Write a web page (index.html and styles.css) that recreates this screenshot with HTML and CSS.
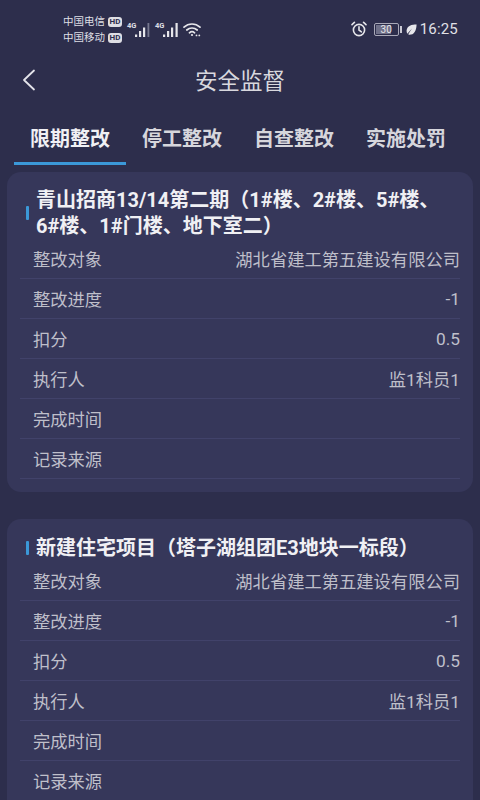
FILE: index.html
```html
<!DOCTYPE html>
<html lang="zh">
<head>
<meta charset="utf-8">
<title>安全监督</title>
<link rel="stylesheet" href="styles.css">
</head>
<body>
<div class="status">
  <div class="status-left">
    <div class="carriers">
      <div class="carrier"><span>中国电信</span><b class="hd">HD</b></div>
      <div class="carrier"><span>中国移动</span><b class="hd">HD</b></div>
    </div>
    <div class="signal"><span class="net">4G</span>
      <svg class="bars" width="16" height="16" viewBox="0 0 16 16"><rect x="0" y="12.500" width="2.200" height="2.500" fill="#e6e6ea"/><rect x="4" y="9" width="2.200" height="6" fill="#e6e6ea"/><rect x="8" y="5.500" width="2.200" height="9.500" fill="#e6e6ea"/><rect x="12.500" y="1" width="1.800" height="14" fill="#77788f"/></svg>
    </div>
    <div class="signal"><span class="net">4G</span>
      <svg class="bars" width="16" height="16" viewBox="0 0 16 16"><rect x="0" y="12.500" width="2.200" height="2.500" fill="#e6e6ea"/><rect x="4" y="9" width="2.200" height="6" fill="#e6e6ea"/><rect x="8" y="5.500" width="2.200" height="9.500" fill="#e6e6ea"/><rect x="12.500" y="1" width="2.200" height="14" fill="#e6e6ea"/></svg>
    </div>
    <svg class="wifi" width="18" height="15" viewBox="0 0 18 15" fill="none" stroke="#e6e6ea" stroke-width="1.700" stroke-linecap="round"><path d="M1 5.200C5.600 .9 12.400 .9 17 5.200"/><path d="M3.800 8C6.800 5.300 11.200 5.300 14.200 8"/><path d="M6.400 10.800C8 9.400 10 9.400 11.600 10.800"/><circle cx="9" cy="13" r="1.100" fill="#e6e6ea" stroke="none"/><circle cx="13.500" cy="13.400" r=".9" fill="#e6e6ea" stroke="none"/><circle cx="16.300" cy="13.400" r=".9" fill="#e6e6ea" stroke="none"/></svg>
  </div>
  <div class="status-right">
    <svg class="alarm" width="16" height="16" viewBox="0 0 16 16" fill="none" stroke="#e6e6ea" stroke-width="1.600" stroke-linecap="round"><circle cx="8" cy="9" r="5.600"/><path d="M8 5.800V9l2.400 1.800"/><path d="M1 3.600 3.400 1.400M15 3.600 12.600 1.400"/></svg>
    <div class="battery"><div class="battery-body"><span class="battery-fill"></span><span class="battery-num">30</span></div><span class="battery-cap"></span></div>
    <svg class="leaf" width="11" height="11" viewBox="0 0 11 11"><path d="M10.600 .4C5.800 .4 1 1.400 .6 6.600c-.1 1.200.2 2.300.7 3.100L6 4.400 2.200 10.200c.8.5 1.800.6 2.800.4C9.400 9.600 10.400 4.400 10.600 .4Z" fill="#e6e6ea"/></svg>
    <span class="time">16:25</span>
  </div>
</div>

<header class="nav">
  <svg class="back" width="14" height="22" viewBox="0 0 14 22" fill="none" stroke="#e4e4ea" stroke-width="1.800" stroke-linecap="round" stroke-linejoin="round"><path d="M12 1.500 2 11l10 9.500"/></svg>
  <h1 class="nav-title">安全监督</h1>
</header>

<nav class="tabs">
  <div class="tab tab-active">限期整改</div>
  <div class="tab">停工整改</div>
  <div class="tab">自查整改</div>
  <div class="tab">实施处罚</div>
</nav>

<main class="list">
  <section class="card">
    <h2 class="card-title"><span class="marker"></span><span class="card-title-text">青山招商13/14第二期（1#楼、2#楼、5#楼、6#楼、1#门楼、地下室二）</span></h2>
    <div class="row"><span>整改对象</span><span>湖北省建工第五建设有限公司</span></div>
    <div class="row"><span>整改进度</span><span>-1</span></div>
    <div class="row"><span>扣分</span><span>0.5</span></div>
    <div class="row"><span>执行人</span><span>监1科员1</span></div>
    <div class="row"><span>完成时间</span><span></span></div>
    <div class="row"><span>记录来源</span><span></span></div>
  </section>
  <section class="card">
    <h2 class="card-title card-title-single"><span class="marker"></span><span class="card-title-text">新建住宅项目（塔子湖组团E3地块一标段）</span></h2>
    <div class="row"><span>整改对象</span><span>湖北省建工第五建设有限公司</span></div>
    <div class="row"><span>整改进度</span><span>-1</span></div>
    <div class="row"><span>扣分</span><span>0.5</span></div>
    <div class="row"><span>执行人</span><span>监1科员1</span></div>
    <div class="row"><span>完成时间</span><span></span></div>
    <div class="row"><span>记录来源</span><span></span></div>
  </section>
</main>
</body>
</html>
```

FILE: styles.css
```css
* { box-sizing: border-box; }
html, body { margin: 0; padding: 0; }
body {
  width: 480px;
  height: 800px;
  overflow: hidden;
  background: #2d2e4c;
  font-family: Roboto, "Noto Sans CJK SC", sans-serif;
  color: #c9c9d3;
}
.status {
  height: 58px;
  display: flex;
  justify-content: space-between;
  align-items: center;
  padding: 0 22px 0 63px;
  color: #dedee4;
}
.status-left, .status-right { display: flex; align-items: center; }
.carriers { display: flex; flex-direction: column; margin-top: 2px; }
.carrier { display: flex; align-items: center; gap: 3px; height: 16px; font-size: 10.500px; line-height: 16px; }
.hd {
  width: 14px;
  height: 10px;
  border-radius: 3px;
  background: #dedee4;
  color: #2d2e4c;
  font-size: 8px;
  line-height: 10px;
  text-align: center;
  font-weight: 700;
}
.signal { display: flex; align-items: flex-end; margin-left: 5px; height: 18px; }
.net { font-size: 7.500px; font-weight: 700; line-height: 9px; align-self: flex-start; transform: translateY(1px); width: 8px; }
.signal + .signal { margin-left: 4px; }
.wifi { margin-left: 4px; }
.alarm { margin-right: 7px; }
.battery { display: flex; align-items: center; margin-right: 4px; }
.battery-body {
  position: relative;
  width: 25px;
  height: 13px;
  border: 1px solid #a9a9b8;
  border-radius: 2px;
}
.battery-fill { position: absolute; left: 1px; top: 1px; bottom: 1px; width: 15px; background: #6f7088; }
.battery-num { position: absolute; inset: 0; text-align: center; font-size: 10px; line-height: 11px; color: #e6e6ea; }
.battery-cap { width: 2px; height: 7px; margin-left: 1px; background: #c9c9d3; }
.leaf { margin-right: 3px; }
.time { font-size: 15px; line-height: 18px; letter-spacing: .2px; color: #e0e0e6; }

.nav { height: 47px; position: relative; display: flex; align-items: center; justify-content: center; }
.back { position: absolute; left: 22px; top: 11px; }
.nav-title { margin: 0; font-size: 22.500px; font-weight: 400; line-height: 47px; color: #d8d8de; }

.tabs { height: 60px; display: flex; padding-left: 14px; }
.tab {
  width: 112px;
  height: 60px;
  padding-top: 19px;
  text-align: center;
  font-size: 20px;
  line-height: 30px;
  font-weight: 700;
  color: #d6d6dc;
  border-bottom: 3px solid transparent;
}
.tab-active { color: #f0f0f4; border-bottom-color: #3b98d8; }

.list { padding: 7px 7px 0; display: flex; flex-direction: column; gap: 27px; }
.card { background: #36375a; border-radius: 14px; padding: 15px 13px 13px; }
.card-title {
  margin: 0;
  display: flex;
  align-items: center;
  padding-left: 6px;
  font-size: 20px;
  line-height: 26px;
  font-weight: 700;
  color: #f0f0f4;
}
.card-title-single { min-height: 27px; }
.marker { flex: none; width: 3px; height: 14px; margin-right: 7px; border-radius: 1px; background: #3b98d8; }
.card-title-text { flex: 1; min-width: 0; }
.row {
  height: 40px;
  display: flex;
  justify-content: space-between;
  align-items: center;
  padding-left: 13px;
  font-size: 17.300px;
  color: #bfbfca;
  border-bottom: 1px solid #41426a;
}
```
